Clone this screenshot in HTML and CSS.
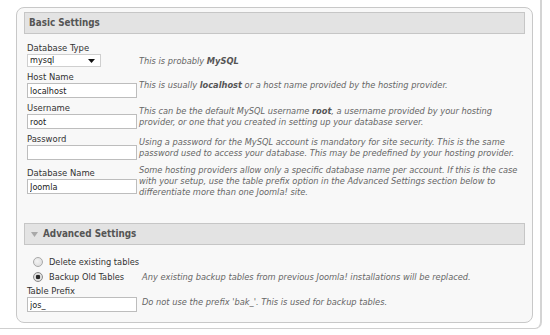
FILE: index.html
```html
<!DOCTYPE html>
<html>
<head>
<meta charset="utf-8">
<title>Database Configuration</title>
<link rel="stylesheet" href="styles.css">
</head>
<body>
<div class="frame">
  <div class="panel">
    <div class="hdr">Basic Settings</div>
    <div class="form basic">
      <div class="row">
        <div class="field">
          <span class="lbl">Database Type</span>
          <div class="select"><span>mysql</span><svg class="arrow" width="7" height="4" viewBox="0 0 7 4"><polygon points="0,0 7,0 3.5,4" fill="#111"/></svg></div>
        </div>
        <div class="desc desc-type">This is probably <b>MySQL</b></div>
      </div>
      <div class="row">
        <div class="field">
          <span class="lbl">Host Name</span>
          <input class="inp" type="text" value="localhost">
        </div>
        <div class="desc">This is usually <b>localhost</b> or a host name provided by the hosting provider.</div>
      </div>
      <div class="row">
        <div class="field">
          <span class="lbl">Username</span>
          <input class="inp" type="text" value="root">
        </div>
        <div class="desc">This can be the default MySQL username <b>root</b>, a username provided by your hosting<br>provider, or one that you created in setting up your database server.</div>
      </div>
      <div class="row">
        <div class="field">
          <span class="lbl">Password</span>
          <input class="inp" type="password" value="">
        </div>
        <div class="desc">Using a password for the MySQL account is mandatory for site security. This is the same<br>password used to access your database. This may be predefined by your hosting provider.</div>
      </div>
      <div class="row">
        <div class="field">
          <span class="lbl">Database Name</span>
          <input class="inp" type="text" value="Joomla">
        </div>
        <div class="desc">Some hosting providers allow only a specific database name per account. If this is the case<br>with your setup, use the table prefix option in the Advanced Settings section below to<br>differentiate more than one Joomla! site.</div>
      </div>
    </div>
    <div class="hdr adv"><svg class="tri" width="7" height="5" viewBox="0 0 7 5"><polygon points="0,0 7,0 3.5,5" fill="#a8a8a8"/></svg>Advanced Settings</div>
    <div class="form advanced">
      <div class="rrow">
        <div class="opt"><span class="radio"></span><span class="rlbl">Delete existing tables</span></div>
        <div></div>
      </div>
      <div class="rrow">
        <div class="opt"><span class="radio checked"></span><span class="rlbl">Backup Old Tables</span></div>
        <div class="desc">Any existing backup tables from previous Joomla! installations will be replaced.</div>
      </div>
      <div class="row prefix">
        <div class="field">
          <span class="lbl">Table Prefix</span>
          <input class="inp" type="text" value="jos_">
        </div>
        <div class="desc desc-prefix">Do not use the prefix 'bak_'. This is used for backup tables.</div>
      </div>
    </div>
  </div>
</div>
</body>
</html>
```
FILE: styles.css
```css
* { box-sizing: border-box; }
html, body { margin: 0; padding: 0; background: #fff; }
body {
  width: 550px;
  height: 335px;
  overflow: hidden;
  font-family: "DejaVu Sans Condensed", "DejaVu Sans", sans-serif;
  font-stretch: condensed;
  color: #333;
}
.frame {
  width: 542px;
  height: 329px;
  border-right: 2px solid #d4d4d4;
  border-bottom: 1px solid #cfcfcf;
  border-bottom-right-radius: 7px;
  padding: 7px 0 0 16px;
}
.panel {
  width: 517px;
  height: 316px;
  border: 1px solid #c8c8c8;
  border-radius: 8px;
  background: #f8f8f8;
  padding: 4px 7px 0;
}
.hdr {
  height: 22px;
  border: 1px solid #c6c6c6;
  background: #e3e3e3;
  font-weight: bold;
  font-size: 9.8px;
  color: #555;
  line-height: 20px;
  padding-left: 4px;
  white-space: nowrap;
}
.hdr.adv {
  margin-top: 24px;
  padding-left: 6px;
  display: flex;
  align-items: center;
}
.tri { margin-right: 5px; }
.form { padding-left: 3px; }
.basic { margin-top: 6px; }
.row {
  display: grid;
  grid-template-columns: 112px 1fr;
  align-items: center;
  padding: 2px 0;
}
.lbl {
  display: block;
  font-size: 9.4px;
  line-height: 12px;
  height: 12px;
  white-space: nowrap;
}
.inp {
  display: block;
  width: 110px;
  height: 15px;
  margin: 0;
  border: 1px solid #bdbdbd;
  background: #fff;
  font-family: "DejaVu Sans Condensed", "DejaVu Sans", sans-serif;
  font-stretch: condensed;
  font-size: 9px;
  color: #222;
  padding: 0 2px;
  outline: none;
}
.select {
  width: 74px;
  height: 13px;
  border: 1px solid #cfcfcf;
  background: #fff;
  font-size: 9px;
  line-height: 11px;
  color: #222;
  padding: 0 5px 0 2px;
  display: flex;
  align-items: center;
  justify-content: space-between;
}
.desc {
  font-style: italic;
  font-size: 9.2px;
  line-height: 11px;
  color: #666;
  white-space: nowrap;
}
.desc b { color: #555; }
.desc-type { padding-top: 11px; }
.advanced { margin-top: 9px; }
.rrow {
  display: grid;
  grid-template-columns: 115px 1fr;
  align-items: center;
  height: 15px;
}
.opt {
  display: flex;
  align-items: center;
  padding-left: 6px;
}
.radio {
  width: 10px;
  height: 10px;
  border-radius: 50%;
  border: 1px solid #a9a9a9;
  background: radial-gradient(circle at 40% 40%, #f4f4f4 0%, #d8d8d8 100%);
  margin-right: 6px;
  flex: none;
}
.radio.checked {
  border-color: #8a8a8a;
  background: radial-gradient(circle, #2a2a2a 0 2px, #e6e6e6 2.6px, #cfcfcf 100%);
}
.rlbl {
  font-size: 9.2px;
  line-height: 12px;
  white-space: nowrap;
}
.prefix {
  grid-template-columns: 115px 1fr;
  padding: 1px 0;
}
.desc-prefix { padding-top: 6px; }
```
